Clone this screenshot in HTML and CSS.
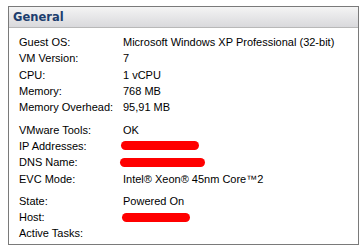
FILE: index.html
```html
<!DOCTYPE html>
<html>
<head>
<meta charset="utf-8">
<link rel="stylesheet" href="styles.css">
</head>
<body>
<div class="panel">
  <div class="header">General</div>
  <div class="content">
    <div class="group">
      <div class="row"><span class="label">Guest OS:</span><span class="value">Microsoft Windows XP Professional (32-bit)</span></div>
      <div class="row"><span class="label">VM Version:</span><span class="value">7</span></div>
      <div class="row"><span class="label">CPU:</span><span class="value">1 vCPU</span></div>
      <div class="row"><span class="label">Memory:</span><span class="value">768 MB</span></div>
      <div class="row"><span class="label">Memory Overhead:</span><span class="value">95,91 MB</span></div>
    </div>
    <div class="group">
      <div class="row"><span class="label">VMware Tools:</span><span class="value">OK</span></div>
      <div class="row"><span class="label">IP Addresses:</span><span class="value"><span class="redact r-ip"></span></span></div>
      <div class="row"><span class="label">DNS Name:</span><span class="value"><span class="redact r-dns"></span></span></div>
      <div class="row"><span class="label">EVC Mode:</span><span class="value">Intel® Xeon® 45nm Core™2</span></div>
    </div>
    <div class="group">
      <div class="row"><span class="label">State:</span><span class="value">Powered On</span></div>
      <div class="row"><span class="label">Host:</span><span class="value"><span class="redact r-host"></span></span></div>
      <div class="row"><span class="label">Active Tasks:</span><span class="value"></span></div>
    </div>
  </div>
</div>
</body>
</html>
```
FILE: styles.css
```css
html, body {
  margin: 0;
  padding: 0;
  background: #ffffff;
}
body {
  padding: 6px 0 0 8px;
  font-family: "Liberation Sans", Arial, sans-serif;
  font-size: 11px;
  color: #000;
}
.panel {
  width: 351px;
  height: 239px;
  border: 1px solid #7a7a7a;
  box-sizing: border-box;
  display: flex;
  flex-direction: column;
}
.header {
  height: 20px;
  background: linear-gradient(to bottom, #f4f4f4, #d9d9dc);
  border-bottom: 1px solid #b8b8b8;
  font-family: "DejaVu Sans", sans-serif;
  font-weight: bold;
  font-size: 11.5px;
  color: #1c3d6e;
  padding-left: 4px;
  display: flex;
  align-items: center;
}
.content {
  padding: 6px 0 0 10px;
  display: flex;
  flex-direction: column;
  gap: 6px;
}
.group {
  display: flex;
  flex-direction: column;
}
.row {
  display: flex;
  height: 16.3px;
  align-items: center;
}
.label {
  width: 104px;
  flex: none;
}
.value {
  display: flex;
  align-items: center;
}
.redact {
  display: block;
  background: #ff0000;
  border-radius: 5px;
  height: 9px;
}
.r-ip { width: 78px; margin-left: -2px; }
.r-dns { width: 85px; margin-left: -3px; }
.r-host { width: 68px; margin-left: -1px; }
```
